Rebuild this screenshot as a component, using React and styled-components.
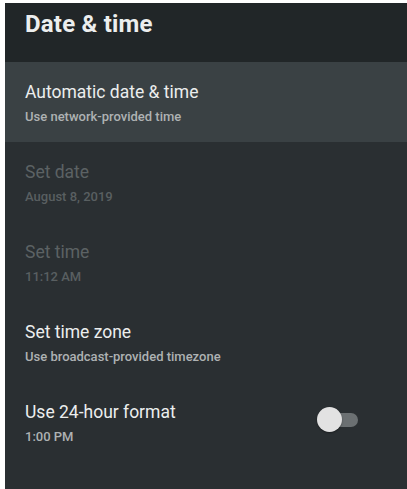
import React from "react";
import styled, { createGlobalStyle } from "styled-components";

const Global = createGlobalStyle`
  html, body { margin: 0; padding: 0; background: #ffffff; }
  body { font-family: Roboto, "Noto Sans", sans-serif; }
`;

const Screen = styled.div`
  margin: 3px 0 0 5px;
  height: 486px;
  background: #2a2f32;
  display: flex;
  flex-direction: column;
  overflow: hidden;
`;

const Header = styled.header`
  height: 59px;
  flex: none;
  background: #212628;
  padding: 0 0 0 20px;
  display: flex;
  align-items: flex-start;
`;

const Title = styled.h1`
  margin: 7px 0 0 0;
  font-size: 24px;
  line-height: 28px;
  font-weight: 700;
  color: #eceeee;
  letter-spacing: 0.2px;
`;

const Row = styled.div`
  height: 80px;
  flex: none;
  box-sizing: border-box;
  padding: 19px 0 0 20px;
  background: ${(p) => (p.$focused ? "#3a4144" : "transparent")};
  display: flex;
  align-items: flex-start;
  justify-content: space-between;
`;

const Texts = styled.div`
  display: flex;
  flex-direction: column;
`;

const Label = styled.div`
  font-size: 17.5px;
  line-height: 22px;
  color: ${(p) => (p.$disabled ? "#5c6264" : "#eceeee")};
`;

const Sub = styled.div`
  margin-top: 6px;
  font-size: 13px;
  line-height: 16px;
  font-weight: 500;
  letter-spacing: 0;
  color: ${(p) => (p.$disabled ? "#595f61" : "#aeb2b3")};
`;

const Switch = styled.div`
  position: relative;
  width: 41px;
  height: 26px;
  margin: 6px 49px 0 0;
  display: flex;
  align-items: center;
  justify-content: flex-end;
`;

const Track = styled.div`
  width: 30px;
  height: 14px;
  border-radius: 7px;
  background: #6b7072;
`;

const Thumb = styled.div`
  position: absolute;
  left: 0;
  top: 0;
  width: 25px;
  height: 25px;
  border-radius: 50%;
  background: #e2e2e2;
  box-shadow: 0 1px 2px rgba(0, 0, 0, 0.35);
`;

const items = [
  { label: "Automatic date & time", sub: "Use network-provided time", focused: true },
  { label: "Set date", sub: "August 8, 2019", disabled: true },
  { label: "Set time", sub: "11:12 AM", disabled: true },
  { label: "Set time zone", sub: "Use broadcast-provided timezone" },
  { label: "Use 24-hour format", sub: "1:00 PM", toggle: true },
];

export default function App() {
  return (
    <>
      <Global />
      <Screen>
        <Header>
          <Title>Date &amp; time</Title>
        </Header>
        {items.map((it) => (
          <Row key={it.label} $focused={it.focused}>
            <Texts>
              <Label $disabled={it.disabled}>{it.label}</Label>
              <Sub $disabled={it.disabled}>{it.sub}</Sub>
            </Texts>
            {it.toggle && (
              <Switch>
                <Track />
                <Thumb />
              </Switch>
            )}
          </Row>
        ))}
      </Screen>
    </>
  );
}
